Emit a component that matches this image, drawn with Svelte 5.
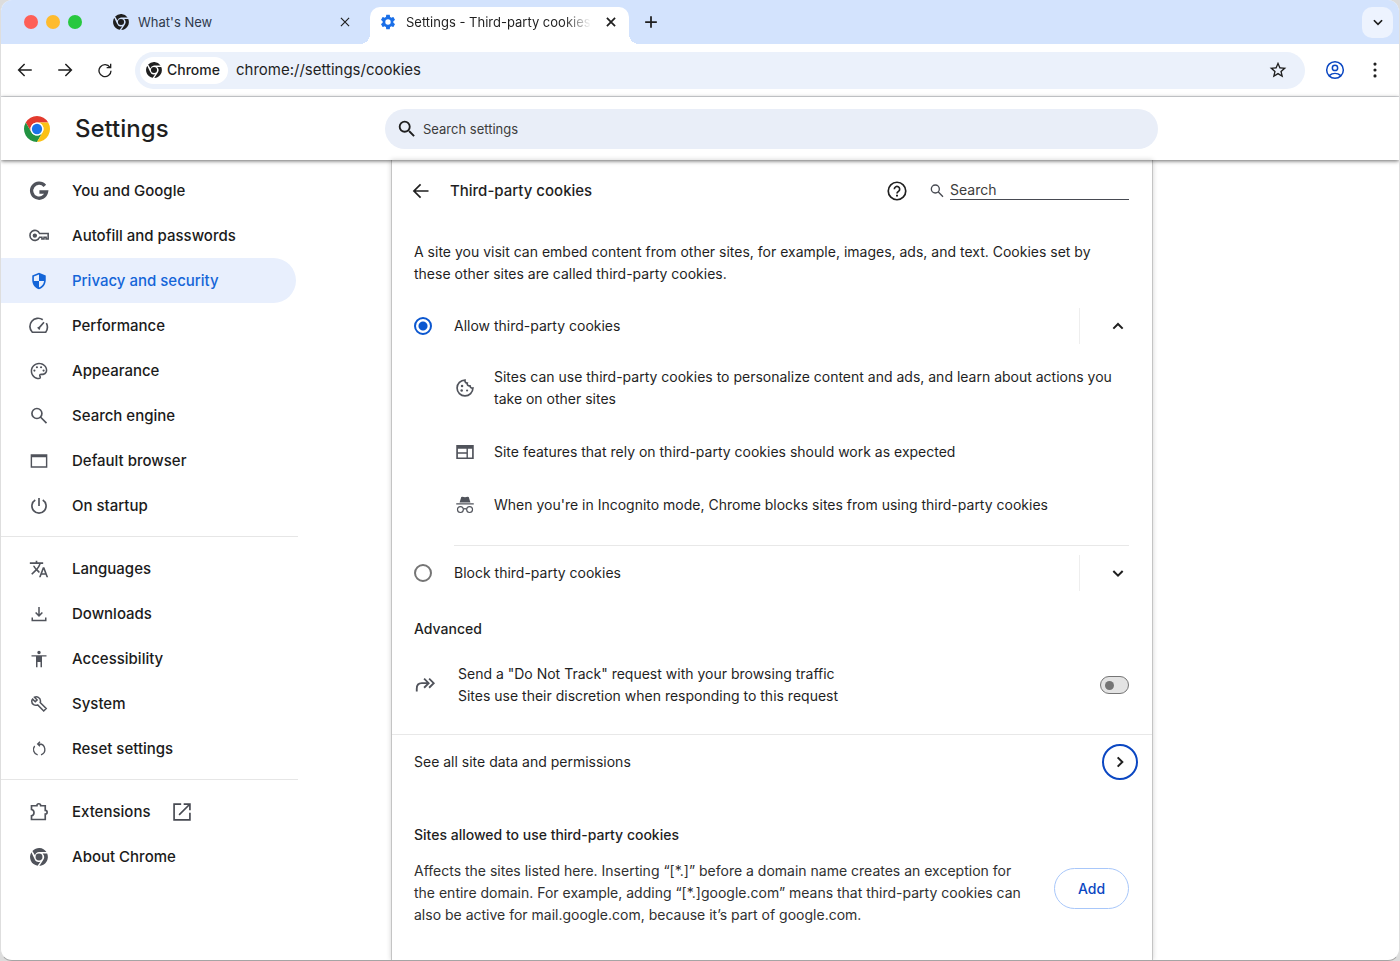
<script lang="ts">
	const groups = [
		[
			{ label: 'You and Google', icon: 'google', size: 20 },
			{ label: 'Autofill and passwords', icon: 'key', size: 20 },
			{ label: 'Privacy and security', icon: 'shield', size: 18 },
			{ label: 'Performance', icon: 'speed', size: 20 },
			{ label: 'Appearance', icon: 'palette', size: 20 },
			{ label: 'Search engine', icon: 'glass', size: 20 },
			{ label: 'Default browser', icon: 'window', size: 20 },
			{ label: 'On startup', icon: 'power', size: 20 }
		],
		[
			{ label: 'Languages', icon: 'translate', size: 20 },
			{ label: 'Downloads', icon: 'download', size: 18 },
			{ label: 'Accessibility', icon: 'person', size: 18 },
			{ label: 'System', icon: 'wrench', size: 18 },
			{ label: 'Reset settings', icon: 'reset', size: 16 }
		],
		[
			{ label: 'Extensions', icon: 'puzzle', size: 20, external: true },
			{ label: 'About Chrome', icon: 'chrome', size: 18 }
		]
	];

	const details = [
		{
			icon: 'cookie',
			text: 'Sites can use third-party cookies to personalize content and ads, and learn about actions you take on other sites'
		},
		{ icon: 'web', text: 'Site features that rely on third-party cookies should work as expected' },
		{
			icon: 'incognito',
			text: "When you're in Incognito mode, Chrome blocks sites from using third-party cookies"
		}
	];

	let current = $state('Privacy and security');
	let policy = $state('allow');
	let doNotTrack = $state(false);
	let url = $state('chrome://settings/cookies');

	// shapes that are filled, all on a 24 unit grid
	const filled: Record<string, string> = {
		search:
			'M15.5 14h-.79l-.28-.27A6.47 6.47 0 0 0 16 9.5 6.5 6.5 0 1 0 9.5 16c1.61 0 3.09-.59 4.23-1.57l.27.28v.79l5 4.99L20.49 19l-4.99-5zm-6 0C7.01 14 5 11.99 5 9.5S7.01 5 9.5 5 14 7.01 14 9.5 11.99 14 9.5 14z',
		shield:
			'M12 1 3 4.5V11c0 5.55 3.84 10.74 9 12 5.16-1.26 9-6.45 9-12V4.5L12 1zm0 2.4V12h6.8c-.5 4.1-3.1 7.6-6.8 8.7V12H5.2V6l6.8-2.6z',
		palette:
			'M12 22C6.49 22 2 17.51 2 12S6.49 2 12 2s10 4.04 10 9c0 3.31-2.69 6-6 6h-1.77c-.28 0-.5.22-.5.5 0 .12.05.23.13.33.41.47.64 1.06.64 1.67A2.5 2.5 0 0 1 12 22zm0-18.2c-4.5 0-8.2 3.7-8.2 8.2s3.7 8.2 8.2 8.2c.4 0 .7-.3.7-.7a.54.54 0 0 0-.14-.35c-.41-.46-.63-1.05-.63-1.65a2.5 2.5 0 0 1 2.5-2.5H16c2.3 0 4.2-1.8 4.2-4.2 0-3.9-3.7-7-8.2-7zM6.5 10.2a1.3 1.3 0 1 0 0 2.6 1.3 1.3 0 0 0 0-2.6zm3-4a1.3 1.3 0 1 0 0 2.6 1.3 1.3 0 0 0 0-2.6zm5 0a1.3 1.3 0 1 0 0 2.6 1.3 1.3 0 0 0 0-2.6zm3 4a1.3 1.3 0 1 0 0 2.6 1.3 1.3 0 0 0 0-2.6z',
		window: 'M2 4h20v16H2V4zm1.7 3.5v10.8h16.6V7.5H3.7z',
		translate:
			'M12.87 15.07l-2.54-2.51.03-.03A17.52 17.52 0 0 0 14.07 6H17V4h-7V2H8v2H1v1.99h11.17C11.5 7.92 10.44 9.75 9 11.35 8.07 10.32 7.3 9.19 6.69 8h-2c.73 1.63 1.73 3.17 2.98 4.56l-5.09 5.02L4 19l5-5 3.11 3.11.76-2.04zM18.5 10h-2L12 22h2l1.12-3h4.75L21 22h2l-4.5-12zm-2.62 7l1.62-4.33L19.12 17h-3.24z',
		person: 'M12 1a2.3 2.3 0 1 1 0 4.6A2.3 2.3 0 0 1 12 1zM22 8.7h-6V23h-2v-7h-4v7H8V8.7H2V6.9h20v1.8z',
		web: 'M1.5 3.5h21v17h-21v-17zm2 4.5v4.2h10.3V8H3.5zm12 0v10.7h5V8h-5zm-12 6v4.7h10.3V14H3.5z',
		gear: 'M19.14 12.94c.04-.3.06-.61.06-.94 0-.32-.02-.64-.07-.94l2.03-1.58c.18-.14.23-.41.12-.61l-1.92-3.32c-.12-.22-.37-.29-.59-.22l-2.39.96c-.5-.38-1.03-.7-1.62-.94l-.36-2.54c-.04-.24-.24-.41-.48-.41h-3.84c-.24 0-.43.17-.47.41l-.36 2.54c-.59.24-1.13.57-1.62.94l-2.39-.96c-.22-.08-.47 0-.59.22L2.74 8.87c-.12.21-.08.47.12.61l2.03 1.58c-.05.3-.09.63-.09.94s.02.64.07.94l-2.03 1.58c-.18.14-.23.41-.12.61l1.92 3.32c.12.22.37.29.59.22l2.39-.96c.5.38 1.03.7 1.62.94l.36 2.54c.05.24.24.41.48.41h3.84c.24 0 .44-.17.47-.41l.36-2.54c.59-.24 1.13-.56 1.62-.94l2.39.96c.22.08.47 0 .59-.22l1.92-3.32c.12-.22.07-.47-.12-.61l-2.01-1.58zM12 15.6a3.6 3.6 0 1 1 0-7.2 3.6 3.6 0 0 1 0 7.2z',
		star: 'M22 9.24l-7.19-.62L12 2 9.19 8.63 2 9.24l5.46 4.73L5.82 21 12 17.27 18.18 21l-1.63-7.03L22 9.24zM12 15.4l-3.76 2.27 1-4.28-3.32-2.88 4.38-.38L12 6.1l1.71 4.04 4.38.38-3.32 2.88 1 4.28L12 15.4z',
		dots: 'M12 3a1.9 1.9 0 1 1 0 3.8A1.9 1.9 0 0 1 12 3zm0 7.1a1.9 1.9 0 1 1 0 3.8 1.9 1.9 0 0 1 0-3.8zm0 7.1a1.9 1.9 0 1 1 0 3.8 1.9 1.9 0 0 1 0-3.8z'
	};

	// shapes that are drawn as lines
	const lines: Record<string, string> = {
		glass: 'M9.5 3a6 6 0 1 0 0 12 6 6 0 0 0 0-12zM14 13.5l7 7',
		power: 'M12 2.500v9.500M7.500 4.800a8.500 8.500 0 1 0 9 0',
		download: 'M12 2.5V14M7.5 10l4.5 4.5 4.5-4.5M3 16.5v4h18v-4',
		wrench:
			'M3.5 5.5 7 9l2.5-2.5L6 3c3-1.5 8 0 8 5 0 .8-.2 1.5-.4 2l8 8-3.3 3.3-8-8c-4 1.5-8-1-8-5 0-1 .5-2.2 1.2-2.8z',
		reset: 'M11 4.5h1.5A8.3 8.3 0 0 1 15 20.7M10 20.7A8.3 8.3 0 0 1 5.5 7.5M13.5 1 10 4.5 13.5 8',
		puzzle: 'M3 4.5h6.500c0-3.200 4.500-3.200 4.500 0h5.500V10c3 0 3 4.500 0 4.500v6.500H3v-4.500c4-1 4-6.500 0-7.500V4.500z',
		speed: 'M16.5 4.5A9.8 9.8 0 0 0 4 19.5h16c2.5-3.5 2.4-8 .8-11M11 15.5l7-8M10.5 13.5l2.5 2.5',
		external: 'M11 2.5H2.5v19h19V13M14 2.5h7.5V10M21 3 8.5 15.5',
		cookie:
			'M12 2.5a9.5 9.5 0 1 0 9.5 9.5c-2 .3-3.4-.8-3.5-2.5-2.6.2-3.8-1.5-3.3-3.5-2 0-3-1.5-2.7-3.5z',
		forward: 'M3 19v-3c0-4 2-6 5.5-6H15M11 5l5 5-5 5M16.5 5l5 5-5 5',
		back: 'M21 12H4M11.5 4l-8 8 8 8',
		next: 'M3 12h17M12.5 4l8 8-8 8',
		reload: 'M19.5 8A9 9 0 1 0 21 13M20.5 2.5v6h-6',
		close: 'M5 5l14 14M19 5 5 19',
		plus: 'M12 2v20M2 12h20',
		down: 'M5 9l7 7 7-7',
		up: 'M5 16l7-7 7 7',
		right: 'M8.5 5l7 7-7 7'
	};
</script>

{#snippet icon(name: string, size = 20, weight = 2)}
	<svg class="icon" width={size} height={size} viewBox="0 0 24 24" aria-hidden="true">
		{#if name === 'chrome'}
			<g fill="currentColor">
				<path d="M12 5.2h9.9A12 12 0 0 0 3.2 3.9L6.6 9.8A6.5 6.5 0 0 1 12 5.2z" />
				<path d="M1.9 5.6A12 12 0 0 0 10.1 23.8L13.9 18.2A6.5 6.5 0 0 1 5.9 14.3z" />
				<path d="M12.4 24A12 12 0 0 0 22.9 7.4H16.8A6.8 6.8 0 0 1 17.6 16z" />
				<circle cx="12" cy="12" r="4.6" />
			</g>
		{:else if name === 'chrome-color'}
			<g transform="scale(.5)">
				<path fill="#e33b2e" d="M24 12H44.78A24 24 0 0 0 3.22 12L13.61 30A12 12 0 0 1 24 12z" />
				<path fill="#229342" d="M3.22 12A24 24 0 0 0 24 48L34.39 30A12 12 0 0 1 13.61 30z" />
				<path fill="#fbc116" d="M24 48A24 24 0 0 0 44.78 12H24A12 12 0 0 1 34.39 30z" />
				<circle cx="24" cy="24" r="12" fill="#fff" />
				<circle cx="24" cy="24" r="9.5" fill="#1a73e8" />
			</g>
		{:else if name === 'google'}
			<path d="M19 5.8A9 9 0 1 0 21 13.2H12.5" fill="none" stroke="currentColor" stroke-width="4" />
		{:else if name === 'key'}
			<g fill="none" stroke="currentColor" stroke-width="1.9">
				<path d="M12.7 9H23v6.5h-2.5v-2H18v2h-2.5v-2h-2.8A6 6 0 1 1 12.7 9z" />
				<circle cx="7" cy="11.5" r="1.7" fill="currentColor" />
			</g>
		{:else if name === 'incognito'}
			<path d="M7.5 2.5 9 2l3 .8L15 2l1.5.5 2 6.500h-13l2-6.500zM1.500 10h21v1.300h-21z" fill="currentColor" />
			<g fill="none" stroke="currentColor" stroke-width="1.4">
				<circle cx="6.5" cy="17.5" r="3.5" />
				<circle cx="17.5" cy="17.5" r="3.5" />
				<path d="M10 17c1.2-.9 2.8-.9 4 0" />
			</g>
		{:else if name === 'account'}
			<g fill="none" stroke="currentColor" stroke-width="1.8">
				<circle cx="12" cy="12" r="10" />
				<circle cx="12" cy="9.5" r="3.2" />
				<path d="M5 18.8c4.2-3.6 9.8-3.6 14 0" />
			</g>
		{:else if name === 'help'}
			<g fill="none" stroke="currentColor" stroke-width="2">
				<circle cx="12" cy="12" r="10.5" />
				<path d="M8.8 9.8a3.2 3.2 0 1 1 5 2.6c-1.1.8-1.8 1.3-1.8 2.6" />
				<path d="M12 16.5v2.2" stroke-width="2.4" />
			</g>
		{:else if filled[name]}
			<path d={filled[name]} fill="currentColor" fill-rule="evenodd" />
		{:else}
			<path d={lines[name]} fill="none" stroke="currentColor" stroke-width={weight} />
			{#if name === 'cookie'}
				<g fill="currentColor">
					<circle cx="8.5" cy="9.5" r="1.5" />
					<circle cx="8" cy="15" r="1.5" />
					<circle cx="14.5" cy="15" r="1.3" />
				</g>
			{/if}
		{/if}
	</svg>
{/snippet}

<div class="window">
	<div class="tabstrip">
		<div class="lights">
			<button class="light red" aria-label="Close window"></button>
			<button class="light yellow" aria-label="Minimize window"></button>
			<button class="light green" aria-label="Zoom window"></button>
		</div>
		<div class="tab">
			<button class="tab-main">
				{@render icon('chrome', 16)}
				<span class="tab-title">What's New</span>
			</button>
			<button class="tab-close" aria-label="Close tab">{@render icon('close', 14, 2)}</button>
		</div>
		<div class="tab active">
			<button class="tab-main">
				<span class="blue">{@render icon('gear', 18)}</span>
				<span class="tab-title fade">Settings - Third-party cookies</span>
			</button>
			<button class="tab-close" aria-label="Close tab">{@render icon('close', 14, 3)}</button>
		</div>
		<button class="new-tab" aria-label="New tab">{@render icon('plus', 14, 3)}</button>
		<button class="tab-search" aria-label="Search tabs">{@render icon('down', 14, 3)}</button>
	</div>

	<div class="toolbar">
		<button class="tool" aria-label="Back">{@render icon('back', 18)}</button>
		<button class="tool" aria-label="Forward">{@render icon('next', 18)}</button>
		<button class="tool" aria-label="Reload">{@render icon('reload', 16)}</button>
		<div class="omnibox">
			<button class="chip">{@render icon('chrome', 16)}Chrome</button>
			<input class="url" type="text" aria-label="Address" bind:value={url} />
			<button class="tool" aria-label="Bookmark this tab">{@render icon('star', 20)}</button>
		</div>
		<button class="tool account" aria-label="Profile">{@render icon('account', 20)}</button>
		<button class="tool" aria-label="Menu">{@render icon('dots', 20)}</button>
	</div>

	<header class="header">
		<div class="brand">
			{@render icon('chrome-color', 26)}
			<h1>Settings</h1>
		</div>
		<label class="search">
			{@render icon('search', 22)}
			<input type="search" placeholder="Search settings" aria-label="Search settings" />
		</label>
	</header>

	<div class="page">
		<nav class="menu">
			{#each groups as items}
				<ul>
					{#each items as item}
						<li>
							<a
								href="#{item.icon}"
								class:selected={item.label === current}
								onclick={() => (current = item.label)}
							>
								<span class="slot">{@render icon(item.icon, item.size)}</span>
								{item.label}
								{#if item.external}
									<span class="external">{@render icon('external', 20)}</span>
								{/if}
							</a>
						</li>
					{/each}
				</ul>
			{/each}
		</nav>

		<main class="card">
			<div class="title-row">
				<button class="tool" aria-label="Back to Privacy and security">{@render icon('back', 20)}</button>
				<h2>Third-party cookies</h2>
				<button class="tool" aria-label="Help">{@render icon('help', 20)}</button>
				<label class="find">
					{@render icon('glass', 16)}
					<input type="search" placeholder="Search" aria-label="Search third-party cookies" />
				</label>
			</div>

			<p class="intro">
				A site you visit can embed content from other sites, for example, images, ads, and text. Cookies
				set by these other sites are called third-party cookies.
			</p>

			<div class="option">
				<label><input type="radio" value="allow" bind:group={policy} />Allow third-party cookies</label>
				<button class="expand" aria-label="Collapse">{@render icon('up', 16, 3)}</button>
			</div>
			<ul class="details">
				{#each details as detail}
					<li>
						<span class="slot">{@render icon(detail.icon, 20)}</span>
						<span>{detail.text}</span>
					</li>
				{/each}
			</ul>
			<div class="option second">
				<label><input type="radio" value="block" bind:group={policy} />Block third-party cookies</label>
				<button class="expand" aria-label="Expand">{@render icon('down', 16, 3)}</button>
			</div>

			<h3 class="advanced">Advanced</h3>
			<label class="dnt">
				<span class="slot">{@render icon('forward', 22)}</span>
				<span class="dnt-text">
					<span>Send a "Do Not Track" request with your browsing traffic</span>
					<span>Sites use their discretion when responding to this request</span>
				</span>
				<input type="checkbox" role="switch" bind:checked={doNotTrack} />
			</label>

			<div class="site-data">
				<span>See all site data and permissions</span>
				<button class="go" aria-label="See all site data and permissions">
					{@render icon('right', 16, 3)}
				</button>
			</div>

			<h3 class="allowed">Sites allowed to use third-party cookies</h3>
			<div class="exceptions">
				<p>
					Affects the sites listed here. Inserting “[*.]” before a domain name creates an exception for
					the entire domain. For example, adding “[*.]google.com” means that third-party cookies can
					also be active for mail.google.com, because it’s part of google.com.
				</p>
				<button class="add">Add</button>
			</div>
		</main>
	</div>
</div>

<style>
	:global(body) {
		margin: 0;
		background: #dcdcdc;
	}

	.window {
		display: flex;
		flex-direction: column;
		box-sizing: border-box;
		min-height: 100vh;
		overflow: hidden;
		border: 1px solid #dedede;
		border-top: 0;
		border-bottom-color: #a5a5a5;
		border-radius: 12px;
		background: #fff;
		color: #1f1f1f;
		font: 14px/22px Inter, 'Liberation Sans', sans-serif;
	}

	button,
	input {
		margin: 0;
		padding: 0;
		border: 0;
		background: none;
		color: inherit;
		font: inherit;
	}

	button {
		display: flex;
		align-items: center;
		justify-content: center;
		cursor: pointer;
	}

	input {
		min-width: 0;
		outline: 0;
	}

	input::placeholder {
		color: #3c3c3c;
		opacity: 1;
	}

	h1,
	h2,
	h3,
	p,
	ul {
		margin: 0;
		padding: 0;
		list-style: none;
	}

	.icon {
		display: block;
		flex: none;
	}

	.slot {
		display: flex;
		flex: none;
		justify-content: center;
		width: 22px;
		color: #50535b;
	}

	/* tab strip */
	.tabstrip {
		display: flex;
		align-items: center;
		height: 44px;
		padding-right: 6px;
		background: #d3e3fd;
	}

	.lights {
		display: flex;
		gap: 8px;
		width: 80px;
		padding-left: 23px;
	}

	.light {
		width: 14px;
		height: 14px;
		border-radius: 50%;
	}

	.red {
		background: #fe5f57;
	}

	.yellow {
		background: #febb2e;
	}

	.green {
		background: #28c83f;
	}

	.tab {
		position: relative;
		display: flex;
		box-sizing: border-box;
		align-self: flex-end;
		width: 259px;
		height: 37px;
		margin-right: 7px;
		padding: 0 10px 7px 9px;
	}

	.tab.active {
		margin-right: 14px;
		border-radius: 10px 10px 0 0;
		background: #fff;
	}

	/* flared feet where the active tab meets the toolbar */
	.tab.active::before,
	.tab.active::after {
		content: '';
		position: absolute;
		bottom: 0;
		width: 10px;
		height: 10px;
	}

	.tab.active::before {
		left: -10px;
		background: radial-gradient(circle at 0 0, transparent 10px, #fff 10px);
	}

	.tab.active::after {
		right: -10px;
		background: radial-gradient(circle at 100% 0, transparent 10px, #fff 10px);
	}

	.tab-main {
		flex: 1;
		justify-content: flex-start;
		gap: 9px;
		min-width: 0;
	}

	.tab-title {
		flex: 1;
		overflow: hidden;
		color: #303a4c;
		font-size: 13px;
		text-align: left;
		white-space: nowrap;
	}

	.active .tab-title {
		color: #1f1f1f;
	}

	.fade {
		mask-image: linear-gradient(to right, #000 85%, transparent);
	}

	.blue {
		color: #1a6fe8;
	}

	.tab-close {
		width: 16px;
		margin-left: 12px;
	}

	.new-tab {
		width: 16px;
		height: 28px;
	}

	.tab-search {
		width: 31px;
		height: 31px;
		margin-left: auto;
		border-radius: 10px;
		background: #edf3fe;
	}

	/* toolbar */
	.toolbar {
		display: flex;
		align-items: center;
		gap: 16px;
		height: 52px;
		padding: 0 12px;
		border-bottom: 1px solid #dfe1e5;
	}

	.tool {
		flex: none;
		width: 24px;
		height: 24px;
	}

	.account {
		color: #0b47c2;
	}

	.omnibox {
		display: flex;
		flex: 1;
		align-items: center;
		box-sizing: border-box;
		height: 37px;
		margin: 0 2px;
		padding: 0 15px 0 5px;
		border-radius: 19px;
		background: #ebf1fb;
	}

	.chip {
		gap: 5px;
		height: 27px;
		padding: 0 8px 0 6px;
		border-radius: 14px;
		background: #fff;
		font-weight: 500;
	}

	.url {
		flex: 1;
		margin-left: 8px;
		font-size: 15px;
	}

	/* settings header */
	.header {
		position: relative;
		display: grid;
		grid-template-columns: 384px minmax(0, 1fr) 241px;
		align-items: center;
		height: 63px;
		box-shadow: 0 1px 4px rgb(0 0 0 / 60%);
	}

	.brand {
		display: flex;
		align-items: center;
		gap: 25px;
		padding-left: 23px;
	}

	h1 {
		font-size: 24px;
		font-weight: 500;
		line-height: 32px;
	}

	.search {
		display: flex;
		align-items: center;
		gap: 5px;
		height: 40px;
		padding: 0 11px;
		border-radius: 20px;
		background: #e9eef8;
	}

	.search input {
		flex: 1;
		font-size: 13px;
	}

	/* body */
	.page {
		display: grid;
		flex: 1;
		grid-template-columns: 390px minmax(0, 1fr) 246px;
	}

	.menu {
		width: 297px;
		padding-top: 8px;
	}

	.menu ul + ul {
		margin-top: 8px;
		padding-top: 9px;
		border-top: 1px solid #e6e6e6;
	}

	.menu a {
		display: flex;
		align-items: center;
		gap: 22px;
		height: 45px;
		margin-right: 2px;
		padding-left: 27px;
		border-radius: 0 23px 23px 0;
		color: #1b1b1b;
		font-size: 15px;
		font-weight: 500;
		text-decoration: none;
	}

	.menu a.selected,
	.menu a.selected .slot {
		color: #1465d8;
	}

	.menu a.selected {
		background: #e8effd;
	}

	.external {
		color: #474a52;
	}

	.card {
		padding: 0 23px 0 22px;
		border-right: 1px solid #c4c4c4;
		border-left: 1px solid #c4c4c4;
		box-shadow: 0 0 5px rgb(0 0 0 / 18%);
	}

	.title-row {
		display: flex;
		align-items: center;
		height: 62px;
		margin-left: -5px;
	}

	h2 {
		flex: 1;
		margin-left: 17px;
		font-size: 15px;
		font-weight: 500;
	}

	.find {
		display: flex;
		align-items: center;
		gap: 5px;
		margin-left: 20px;
		color: #474a52;
	}

	.find input {
		width: 179px;
		padding-bottom: 1px;
		border-bottom: 1px solid #474a52;
		line-height: 16px;
	}

	.intro {
		margin: 19px 0;
	}

	.option {
		display: flex;
		align-items: center;
		justify-content: space-between;
		height: 44px;
	}

	.option label {
		display: flex;
		align-items: center;
		gap: 22px;
	}

	input[type='radio'] {
		appearance: none;
		box-sizing: border-box;
		width: 18px;
		height: 18px;
		border: 2px solid #757575;
		border-radius: 50%;
	}

	input[type='radio']:checked {
		border-color: #0b57d0;
		background: radial-gradient(circle, #0b57d0 4px, transparent 5px);
	}

	.expand {
		justify-content: flex-end;
		width: 50px;
		height: 36px;
		padding-right: 3px;
		border-left: 1px solid #eee;
	}

	.details {
		display: flex;
		flex-direction: column;
		gap: 31px;
		margin-left: 40px;
		padding: 18px 0 29px;
		border-bottom: 1px solid #e8e8e8;
	}

	.details li {
		display: flex;
		align-items: center;
		gap: 18px;
	}

	.second {
		margin-top: 5px;
	}

	h3 {
		font-size: 14px;
		font-weight: 500;
	}

	.advanced {
		margin: 23px 0;
	}

	.dnt {
		display: flex;
		align-items: center;
		gap: 22px;
		padding-bottom: 27px;
	}

	.dnt-text {
		display: flex;
		flex: 1;
		flex-direction: column;
	}

	input[type='checkbox'] {
		appearance: none;
		display: flex;
		align-items: center;
		box-sizing: border-box;
		width: 29px;
		height: 18px;
		padding: 0 4px;
		border: 1px solid #757575;
		border-radius: 9px;
		background: #e3e3e3;
	}

	input[type='checkbox']::before {
		content: '';
		width: 9px;
		height: 9px;
		border-radius: 50%;
		background: #757575;
	}

	input[type='checkbox']:checked {
		justify-content: flex-end;
		background: #a8c7fa;
	}

	.site-data {
		display: flex;
		align-items: center;
		justify-content: space-between;
		height: 53px;
		margin: 0 -23px 0 -22px;
		padding: 0 14px 0 22px;
		border-top: 1px solid #e8e8e8;
	}

	.go {
		box-sizing: border-box;
		width: 36px;
		height: 36px;
		border: 2px solid #0b47c2;
		border-radius: 50%;
	}

	.allowed {
		margin: 36px 0 14px;
	}

	.exceptions {
		display: flex;
		align-items: flex-start;
		gap: 24px;
		padding-bottom: 32px;
	}

	.exceptions p {
		flex: 1;
		color: #303030;
	}

	.add {
		box-sizing: border-box;
		width: 75px;
		height: 41px;
		margin-top: 8px;
		border: 1px solid #a8c7fa;
		border-radius: 21px;
		color: #0b47c2;
		font-weight: 500;
	}
</style>
